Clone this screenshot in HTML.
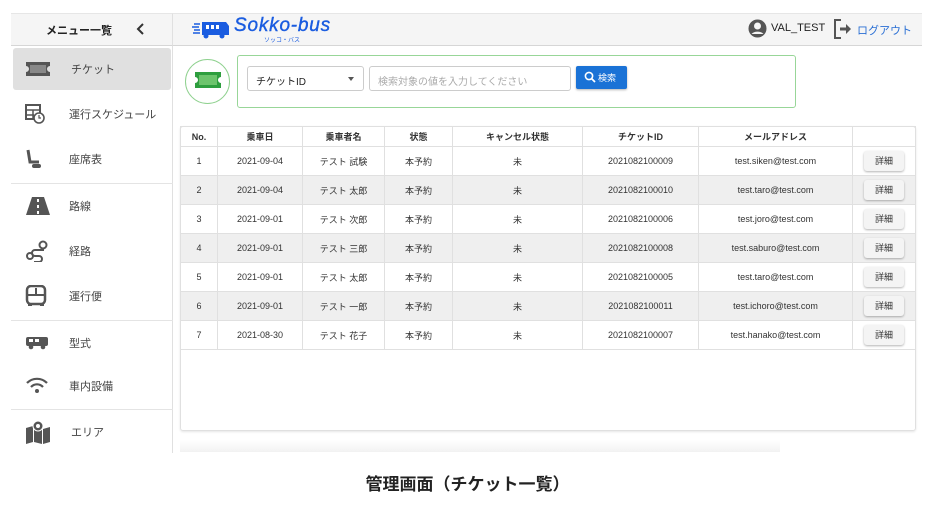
<!DOCTYPE html>
<html><head><meta charset="utf-8"><style>
*{box-sizing:border-box;margin:0;padding:0}
body{width:935px;height:505px;background:#fff;font-family:"Liberation Sans","Noto Sans CJK JP",sans-serif;position:relative;overflow:hidden;color:#333}
.a{position:absolute}
.side{left:11px;top:13px;width:162px;height:440px;background:#fff;border-right:1px solid #e0e0e0}
.hd{left:11px;top:13px;width:911px;height:33px;background:#f5f5f5;border-top:1px solid #e6e6e6;border-bottom:1px solid #d6d6d6}
.it{position:absolute;left:2px;width:158px;height:42px;font-size:11px;color:#444;display:flex;align-items:center}
.it svg{position:absolute;left:12px}
.it span{position:absolute;left:56px}
.dv{position:absolute;left:0;width:162px;height:1px;background:#e4e4e4}
table{border-collapse:collapse;font-size:9px;color:#333}
td,th{border:1px solid #e0e0e0;text-align:center;height:29px;padding:0}
th{height:20px;font-weight:bold}
tr.g td{background:#efefef}
.btn{display:inline-block;width:40px;height:20px;line-height:20px;background:#f4f4f4;border-radius:3px;box-shadow:0 1px 2px rgba(0,0,0,.3);font-size:9px}
</style></head><body>
<div class="a hd"></div>
<div class="a" style="left:11px;top:13px;width:162px;height:33px;background:#f5f5f5;border-right:1px solid #e0e0e0;border-bottom:1px solid #d6d6d6;border-top:1px solid #e6e6e6"></div>
<div class="a" style="left:46px;top:22px;font-size:11px;font-weight:bold;color:#222">メニュー一覧</div>
<svg class="a" style="left:135px;top:22px" width="10" height="14"><path d="M8 2 L3 7 L8 12" stroke="#333" stroke-width="2" fill="none"/></svg>
<div class="a side" style="top:46px;height:407px">
<div class="it" style="top:2px;background:#e0e0e0;border-radius:3px"><svg width="26" height="16"><path d="M1 1h24v4a3 3 0 0 0 0 6v4H1v-4a3 3 0 0 0 0-6z" fill="#555"/><rect x="5" y="4" width="16" height="8" fill="#888"/></svg><span style="left:58px">チケット</span></div>
<div class="it" style="top:47px"><svg width="20" height="20"><rect x="1" y="1" width="14" height="14" fill="none" stroke="#555" stroke-width="2"/><path d="M1 6h14M1 11h8M8 6v9" stroke="#555" stroke-width="1.5"/><circle cx="14" cy="14" r="5" fill="#fff" stroke="#555" stroke-width="1.6"/><path d="M14 11v3h2" stroke="#555" stroke-width="1.2" fill="none"/></svg><span>運行スケジュール</span></div>
<div class="it" style="top:92px"><svg width="20" height="22"><path d="M3 2 L5 14 H14" stroke="#555" stroke-width="3" fill="none"/><rect x="7" y="16" width="9" height="4" rx="2" fill="#555"/></svg><span>座席表</span></div>
<div class="dv" style="top:137px"></div>
<div class="it" style="top:139px"><svg width="26" height="20"><path d="M7 1h12l6 18H1z" fill="#555"/><path d="M13 3v3M13 9v3M13 15v3" stroke="#fff" stroke-width="2"/></svg><span>路線</span></div>
<div class="it" style="top:184px"><svg width="24" height="22"><circle cx="18" cy="5" r="3.5" fill="none" stroke="#555" stroke-width="2"/><circle cx="5" cy="16" r="3" fill="none" stroke="#555" stroke-width="2"/><path d="M18 9v1H10a3 3 0 0 0 0 6h4a3 3 0 0 1 0 6H9" stroke="#555" stroke-width="2" fill="none"/></svg><span>経路</span></div>
<div class="it" style="top:229px"><svg width="22" height="22"><rect x="2" y="1" width="18" height="18" rx="4" fill="none" stroke="#555" stroke-width="2.5"/><path d="M3 10h16M11 3v7" stroke="#555" stroke-width="2"/><rect x="3" y="18" width="4" height="3" fill="#555"/><rect x="15" y="18" width="4" height="3" fill="#555"/></svg><span>運行便</span></div>
<div class="dv" style="top:274px"></div>
<div class="it" style="top:276px"><svg width="24" height="14"><rect x="1" y="1" width="22" height="9" rx="2" fill="#555"/><rect x="4" y="3" width="4" height="3" fill="#fff"/><rect x="10" y="3" width="4" height="3" fill="#fff"/><circle cx="6" cy="11" r="2.3" fill="#555"/><circle cx="18" cy="11" r="2.3" fill="#555"/></svg><span>型式</span></div>
<div class="it" style="top:319px"><svg width="24" height="18"><path d="M2 6a14 14 0 0 1 20 0M6 10a8 8 0 0 1 12 0" stroke="#555" stroke-width="2.2" fill="none"/><circle cx="12" cy="14" r="2" fill="#555"/></svg><span>車内設備</span></div>
<div class="dv" style="top:363px"></div>
<div class="it" style="top:365px"><svg width="26" height="24"><path d="M1 8l7-2v16l-7 2zM9 6l8 3v15l-8-2zM18 9l7-2v15l-7 2z" fill="#555"/><circle cx="13" cy="6" r="5" fill="#555" stroke="#fff"/><circle cx="13" cy="6" r="2" fill="#fff"/></svg><span style="left:58px">エリア</span></div>
</div>
<svg class="a" style="left:192px;top:19px" width="40" height="22"><path d="M10 3h24l3 4v9H10z" fill="#1a5ce0"/><rect x="14" y="6" width="3" height="4" fill="#fff"/><rect x="19" y="6" width="3" height="4" fill="#fff"/><rect x="24" y="6" width="3" height="4" fill="#fff"/><path d="M2 5h6M0 8h7M2 11h6M1 14h7" stroke="#1a5ce0" stroke-width="1.5"/><circle cx="14" cy="17" r="2.5" fill="#1a5ce0"/><circle cx="30" cy="17" r="2.5" fill="#1a5ce0"/></svg>
<div class="a" style="left:234px;top:15px;font-size:19px;font-style:italic;color:#1a5ce0;letter-spacing:0.8px;-webkit-text-stroke:0.4px #1a5ce0">Sokko-bus</div>
<div class="a" style="left:264px;top:35px;font-size:6px;color:#1a5ce0">ソッコ・バス</div>
<svg class="a" style="left:748px;top:19px" width="19" height="19"><circle cx="9.5" cy="9.5" r="9" fill="#555"/><circle cx="9.5" cy="7" r="3.5" fill="#f5f5f5"/><path d="M3.5 15a7 5 0 0 1 12 0" fill="#f5f5f5"/></svg>
<div class="a" style="left:771px;top:22px;font-size:11px;color:#222">VAL_TEST</div>
<svg class="a" style="left:833px;top:18px" width="20" height="22"><path d="M8 2H2v18h6" stroke="#555" stroke-width="2" fill="none"/><path d="M7 11h7" stroke="#555" stroke-width="3"/><path d="M13 6l5 5-5 5z" fill="#555"/></svg>
<div class="a" style="left:857px;top:22px;font-size:11px;color:#2a6fd4">ログアウト</div>
<div class="a" style="left:185px;top:59px;width:45px;height:45px;border-radius:50%;border:1.5px solid #8fd18f"></div>
<svg class="a" style="left:194px;top:71px" width="28" height="18"><path d="M1 1h26v5a3 3 0 0 0 0 6v5H1v-5a3 3 0 0 0 0-6z" fill="#2e9e3e"/><rect x="5" y="4" width="18" height="10" fill="#6cc46c"/></svg>
<div class="a" style="left:237px;top:55px;width:559px;height:53px;border:1.5px solid #98d698;border-radius:3px"></div>
<div class="a" style="left:247px;top:66px;width:117px;height:25px;border:1px solid #ccc;border-radius:3px;font-size:10px;padding:6px 8px;color:#222">チケットID<span style="position:absolute;right:9px;top:10px;border:3.5px solid transparent;border-top:4px solid #555"></span></div>
<div class="a" style="left:369px;top:66px;width:202px;height:25px;border:1px solid #ccc;border-radius:3px;font-size:10px;padding:6px 8px;color:#aaa">検索対象の値を入力してください</div>
<div class="a" style="left:576px;top:66px;width:51px;height:23px;background:#1a72d6;border-radius:2px;color:#fff;font-size:9px;padding:5px 0 0 9px;box-shadow:0 1px 2px rgba(0,0,0,.3)"><svg style="position:absolute;left:8px;top:5px" width="12" height="12"><circle cx="5" cy="5" r="3.6" stroke="#fff" stroke-width="1.6" fill="none"/><path d="M7.5 7.5l3.5 3.5" stroke="#fff" stroke-width="1.8"/></svg><span style="margin-left:13px">検索</span></div>
<div class="a" style="left:180px;top:126px;width:736px;height:305px;border:1px solid #e0e0e0;border-radius:3px;box-shadow:0 1px 2px rgba(0,0,0,.1)"></div>
<div class="a" style="left:180px;top:440px;width:600px;height:12px;background:linear-gradient(#fff,#f2f2f2)"></div>
<table class="a" style="left:180px;top:126px;width:736px">
<tr><th style="width:37px">No.</th><th style="width:85px">乗車日</th><th style="width:82px">乗車者名</th><th style="width:68px">状態</th><th style="width:130px">キャンセル状態</th><th style="width:116px">チケットID</th><th style="width:154px">メールアドレス</th><th></th></tr>
<tr><td>1</td><td>2021-09-04</td><td>テスト 試験</td><td>本予約</td><td>未</td><td>2021082100009</td><td>test.siken@test.com</td><td><span class="btn">詳細</span></td></tr>
<tr class="g"><td>2</td><td>2021-09-04</td><td>テスト 太郎</td><td>本予約</td><td>未</td><td>2021082100010</td><td>test.taro@test.com</td><td><span class="btn">詳細</span></td></tr>
<tr><td>3</td><td>2021-09-01</td><td>テスト 次郎</td><td>本予約</td><td>未</td><td>2021082100006</td><td>test.joro@test.com</td><td><span class="btn">詳細</span></td></tr>
<tr class="g"><td>4</td><td>2021-09-01</td><td>テスト 三郎</td><td>本予約</td><td>未</td><td>2021082100008</td><td>test.saburo@test.com</td><td><span class="btn">詳細</span></td></tr>
<tr><td>5</td><td>2021-09-01</td><td>テスト 太郎</td><td>本予約</td><td>未</td><td>2021082100005</td><td>test.taro@test.com</td><td><span class="btn">詳細</span></td></tr>
<tr class="g"><td>6</td><td>2021-09-01</td><td>テスト 一郎</td><td>本予約</td><td>未</td><td>2021082100011</td><td>test.ichoro@test.com</td><td><span class="btn">詳細</span></td></tr>
<tr><td>7</td><td>2021-08-30</td><td>テスト 花子</td><td>本予約</td><td>未</td><td>2021082100007</td><td>test.hanako@test.com</td><td><span class="btn">詳細</span></td></tr>
</table>
<div class="a" style="left:0;top:470px;width:935px;text-align:center;font-size:17px;font-weight:bold;color:#222">管理画面（チケット一覧）</div>
</body></html>
